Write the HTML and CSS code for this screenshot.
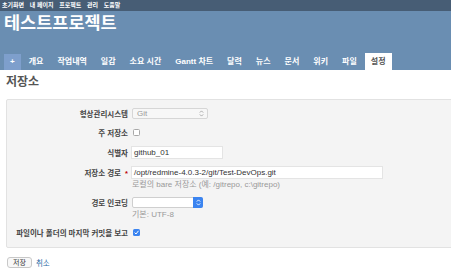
FILE: index.html
```html
<!DOCTYPE html>
<html lang="ko">
<head>
    <meta charset="utf-8">
    <title>저장소 - 테스트프로젝트</title>
    <link rel="stylesheet" href="styles.css">
</head>
<body>
<div class="top-menu">
    <span>초기화면</span>
    <span>내 페이지</span>
    <span>프로젝트</span>
    <span>관리</span>
    <span>도움말</span>
</div>

<div class="header">
    <h1>테스트프로젝트</h1>
    <ul class="main-menu">
        <li><a class="new" href="#">+</a></li>
        <li><a href="#">개요</a></li>
        <li><a href="#">작업내역</a></li>
        <li><a href="#">일감</a></li>
        <li><a href="#">소요 시간</a></li>
        <li><a href="#">Gantt 차트</a></li>
        <li><a href="#">달력</a></li>
        <li><a href="#">뉴스</a></li>
        <li><a href="#">문서</a></li>
        <li><a href="#">위키</a></li>
        <li><a href="#">파일</a></li>
        <li><a class="selected" href="#">설정</a></li>
    </ul>
</div>

<div class="content">
    <h2>저장소</h2>

    <form class="box tabular">
        <div class="row">
            <label>형상관리시스템</label>
            <div class="select disabled" style="width: 76px;">
                <span>Git</span>
                <svg width="5" height="7" viewBox="0 0 5 7"><path d="M0.8 2.6 L2.5 0.9 L4.2 2.6 M0.8 4.4 L2.5 6.1 L4.2 4.4" fill="none" stroke="#999" stroke-width="0.8"/></svg>
            </div>
        </div>
        <div class="row">
            <label>주 저장소</label>
            <span class="checkbox"></span>
        </div>
        <div class="row tall">
            <label>식별자</label>
            <div class="input" style="width: 86px;">github_01</div>
        </div>
        <div class="row">
            <label>저장소 경로 <span class="required">*</span></label>
            <div class="input" style="width: 246px;">/opt/redmine-4.0.3-2/git/Test-DevOps.git</div>
        </div>
        <div class="hint">로컬의 bare 저장소 (예: /gitrepo, c:\gitrepo)</div>
        <div class="row">
            <label>경로 인코딩</label>
            <div class="select popup" style="width: 71px;">
                <span></span>
                <b class="arrows">
                    <svg width="5" height="7" viewBox="0 0 5 7"><path d="M0.8 2.6 L2.5 0.9 L4.2 2.6 M0.8 4.4 L2.5 6.1 L4.2 4.4" fill="none" stroke="#fff" stroke-width="0.9"/></svg>
                </b>
            </div>
        </div>
        <div class="hint">기본: UTF-8</div>
        <div class="row">
            <label>파일이나 폴더의 마지막 커밋을 보고</label>
            <span class="checkbox checked">
                <svg width="7" height="7" viewBox="0 0 7 7"><path d="M1.6 3.6 L3 5 L5.5 1.8" fill="none" stroke="#fff" stroke-width="1"/></svg>
            </span>
        </div>
    </form>

    <div class="actions">
        <button type="button">저장</button>
        <a href="#">취소</a>
    </div>
</div>
</body>
</html>
```

FILE: styles.css
```css
body {
    margin: 0;
    overflow: hidden;
    font-family: "Liberation Sans", "Noto Sans CJK KR", sans-serif;
    font-size: 7.5px;
    color: #333;
    background: #fff;
}

.top-menu {
    height: 11px;
    line-height: 11px;
    padding-left: 2px;
    background: #475d75;
    color: #fff;
    font-size: 6px;
    font-weight: bold;
    white-space: nowrap;
}
.top-menu span {
    margin-right: 4px;
}

.header {
    display: flex;
    flex-direction: column;
    height: 59px;
    background: #6a8eb2;
    color: #fff;
}
.header h1 {
    margin: 2px 0 0 4px;
    font-size: 17.5px;
    line-height: 20px;
    font-weight: bold;
}

.main-menu {
    display: flex;
    margin: auto 0 0 4px;
    padding: 0;
    list-style: none;
}
.main-menu li {
    margin-right: 2px;
}
.main-menu a {
    display: block;
    height: 16px;
    line-height: 16px;
    padding: 0 6px;
    font-size: 8px;
    color: #fff;
    font-weight: bold;
    text-decoration: none;
    white-space: nowrap;
}
.main-menu a.new {
    background: #7e9fcc;
}
.main-menu a.selected {
    background: #fff;
    color: #555;
    padding-top: 1px;
    margin-top: -1px;
}

.content {
    width: 480px;
    padding: 0 6px;
}
.content h2 {
    margin: 5px 0 10px;
    font-size: 12px;
    line-height: 14px;
    color: #555;
}

.box {
    padding: 4px 0 5px;
    background: #f4f4f4;
    border: 1px solid #e2e2e2;
    border-radius: 2px;
}
.row {
    display: flex;
    align-items: center;
    height: 19px;
}
.row.tall {
    height: 21px;
}
.row label {
    width: 121px;
    margin-right: 4px;
    text-align: right;
    font-weight: bold;
    color: #444;
    white-space: nowrap;
}
.required {
    margin-left: 2px;
    color: #bb0000;
}

.hint {
    margin: -2px 0 3px 125px;
    line-height: 10px;
    font-size: 8px;
    color: #999;
}

.input {
    height: 11px;
    line-height: 11px;
    padding: 0 2px;
    margin-left: -1px;
    font-size: 8px;
    background: #fff;
    border: 1px solid #e4e4e4;
    color: #333;
    white-space: nowrap;
    overflow: hidden;
}

.select {
    display: flex;
    align-items: center;
    justify-content: space-between;
    box-sizing: border-box;
    height: 11px;
    padding-left: 4px;
    font-size: 8px;
    border: 1px solid #d6d6d6;
    border-radius: 2px;
    background: #fff;
}
.select.disabled {
    padding-right: 3px;
    background: #f7f7f7;
    color: #999;
}
.select.popup {
    border-color: #cfcfcf;
}
.select .arrows {
    display: flex;
    align-items: center;
    justify-content: center;
    width: 10px;
    height: 11px;
    margin: -1px -1px -1px 0;
    border-radius: 0 2px 2px 0;
    background: #3b84f0;
}

.checkbox {
    display: inline-flex;
    align-items: center;
    justify-content: center;
    box-sizing: border-box;
    width: 7px;
    height: 7px;
    margin-left: 1px;
    border: 1px solid #a8a8a8;
    border-radius: 1.5px;
    background: #fff;
}
.checkbox.checked {
    border: none;
    background: #3b84f0;
}

.actions {
    display: flex;
    align-items: center;
    margin-top: 9px;
}
.actions button {
    height: 11px;
    padding: 0 5px;
    margin: 0 4px 0 1px;
    font-family: inherit;
    font-size: 7px;
    line-height: 9px;
    color: #333;
    background: #f8f8f8;
    border: 1px solid #c8c8c8;
    border-radius: 3px;
}
.actions a {
    color: #2a6aa6;
    text-decoration: none;
}
```
